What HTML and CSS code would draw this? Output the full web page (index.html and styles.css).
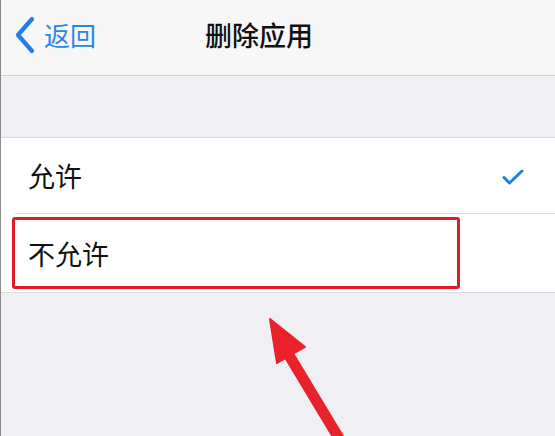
FILE: index.html
```html
<!DOCTYPE html>
<html lang="zh-CN">
<head>
<meta charset="utf-8">
<title>删除应用</title>
<link rel="stylesheet" href="styles.css">
</head>
<body>
<div class="screen">
  <header class="nav">
    <div class="back">
      <svg class="chev" width="22" height="38" viewBox="0 0 22 38"><path d="M18 3 L4 19 L18 35" fill="none" stroke="#1f7fe8" stroke-width="4.2" stroke-linecap="round" stroke-linejoin="round"/></svg>
      <span class="back-text">返回</span>
    </div>
    <div class="title">删除应用</div>
  </header>
  <div class="spacer"></div>
  <section class="group">
    <div class="row row1">
      <span class="label">允许</span>
      <svg class="check" width="24" height="18" viewBox="0 0 24 18"><path d="M3 9.5 L8.5 15 L21 3" fill="none" stroke="#1f7fe8" stroke-width="3" stroke-linecap="round" stroke-linejoin="round"/></svg>
    </div>
    <div class="sep"></div>
    <div class="row row2">
      <span class="label">不允许</span>
    </div>
    <div class="highlight"></div>
  </section>
  <svg class="arrow" width="555" height="436" viewBox="0 0 555 436"><path d="M287 352 L340 440" stroke="#e8212b" stroke-width="11" fill="none"/><path d="M270 319 L305 347 L277 363 Z" fill="#e8212b" stroke="#e8212b" stroke-width="2" stroke-linejoin="round"/></svg>
</div>
</body>
</html>
```
FILE: styles.css
```css
html, body {
  margin: 0;
  padding: 0;
}
body {
  width: 555px;
  height: 436px;
  overflow: hidden;
  background: #efeff4;
  font-family: "Noto Sans CJK SC", "Noto Sans", sans-serif;
}
.screen {
  position: relative;
  width: 555px;
  height: 436px;
  border-left: 1px solid #8a8a8a;
  box-sizing: border-box;
}
.nav {
  height: 75px;
  background: #f7f7f8;
  border-bottom: 1px solid #cfcfd4;
  display: flex;
  align-items: center;
  box-sizing: content-box;
}
.back {
  display: flex;
  align-items: center;
  margin-left: 13px;
  margin-top: -6px;
}
.chev {
  display: block;
}
.back-text {
  margin-left: 8px;
  font-size: 26px;
  line-height: 1;
  color: #2a86e8;
}
.title {
  margin-left: 109px;
  margin-top: -6px;
  font-size: 27px;
  line-height: 1;
  font-weight: 500;
  color: #111;
}
.spacer {
  height: 61px;
}
.group {
  position: relative;
  background: #fff;
  border-top: 1px solid #dcdce0;
  border-bottom: 1px solid #dcdce0;
}
.row {
  display: flex;
  align-items: center;
  justify-content: space-between;
  padding-left: 27px;
  padding-right: 30px;
}
.row1 {
  height: 75px;
}
.row2 {
  height: 78px;
}
.label {
  font-size: 27px;
  line-height: 1;
  color: #111;
}
.check {
  display: block;
  margin-top: 2px;
}
.sep {
  height: 1px;
  background: #dcdce0;
  margin-left: 14px;
}
.highlight {
  position: absolute;
  left: 11px;
  top: 79px;
  width: 448px;
  height: 72px;
  border: 3.5px solid #e31b28;
  border-radius: 3px;
  box-sizing: border-box;
}
.arrow {
  position: absolute;
  left: -1px;
  top: 0;
  pointer-events: none;
}
```
